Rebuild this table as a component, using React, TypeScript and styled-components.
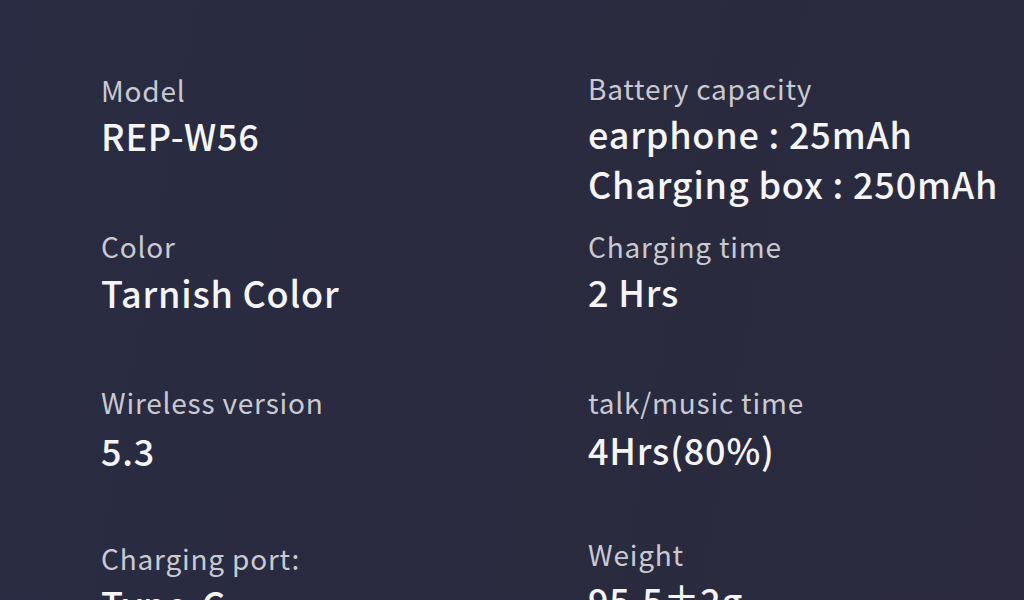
import React from "react";
import styled, { createGlobalStyle } from "styled-components";

const Global = createGlobalStyle`
  html, body { margin: 0; padding: 0; background: #2a2b40; }
  body { width: 1024px; height: 600px; overflow: hidden; }
`;

const Page = styled.div`
  width: 1024px;
  height: 600px;
  box-sizing: border-box;
  overflow: hidden;
  padding: 72px 0 0 101px;
  background: linear-gradient(100deg, #292c42 0%, #2a2a40 50%, #2b2a3e 100%);
  font-family: "Noto Sans CJK SC", "Noto Sans", sans-serif;
  display: grid;
  grid-template-columns: 487px 1fr;
  grid-auto-rows: 156px;
`;

const Cell = styled.div<{ $shift?: number }>`
  display: flex;
  flex-direction: column;
  margin-top: ${(p) => p.$shift ?? 0}px;
`;

const Label = styled.div`
  font-size: 28px;
  line-height: 36px;
  letter-spacing: 0.8px;
  color: #c9c9d2;
  white-space: nowrap;
`;

const Values = styled.div<{ $gap?: number }>`
  display: flex;
  flex-direction: column;
  margin-top: ${(p) => p.$gap ?? 2}px;
`;

const Value = styled.div`
  font-size: 36px;
  line-height: 50px;
  letter-spacing: 0.8px;
  color: #f5f5f8;
  font-weight: 500;
  white-space: nowrap;
`;

const specs: { label: string; values: string[]; shift?: number; gap?: number }[] = [
  { label: "Model", values: ["REP-W56"] },
  { label: "Battery capacity", values: ["earphone : 25mAh", "Charging box : 250mAh"], shift: -2 },
  { label: "Color", values: ["Tarnish Color"], gap: 3 },
  { label: "Charging time", values: ["2 Hrs"] },
  { label: "Wireless version", values: ["5.3"], gap: 5 },
  { label: "talk/music time", values: ["4Hrs(80%)"], gap: 4 },
  { label: "Charging port:", values: ["Type-C"] },
  { label: "Weight", values: ["95.5±2g"], shift: -4 },
];

export default function App() {
  return (
    <>
      <Global />
      <Page>
        {specs.map((s) => (
          <Cell key={s.label} $shift={s.shift}>
            <Label>{s.label}</Label>
            <Values $gap={s.gap}>
              {s.values.map((v) => (
                <Value key={v}>{v}</Value>
              ))}
            </Values>
          </Cell>
        ))}
      </Page>
    </>
  );
}
